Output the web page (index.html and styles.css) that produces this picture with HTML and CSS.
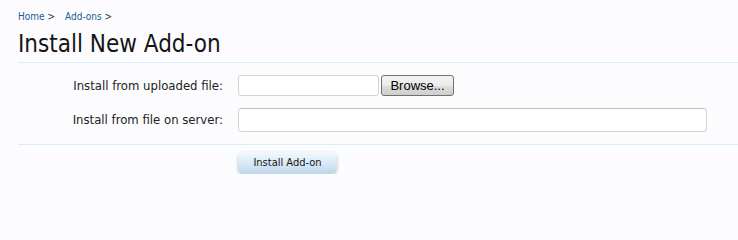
FILE: index.html
```html
<!DOCTYPE html>
<html>
<head>
<meta charset="utf-8">
<link rel="stylesheet" href="styles.css">
</head>
<body>
<div class="page">
  <nav class="crumbs">
    <span class="crumb"><a href="#">Home</a> <span class="arrow">&gt;</span></span>
    <span class="crumb"><a href="#">Add-ons</a> <span class="arrow">&gt;</span></span>
  </nav>
  <h1 class="title">Install New Add-on</h1>
  <form class="form">
    <div class="row">
      <label class="label">Install from uploaded file:</label>
      <div class="ctrl">
        <span class="file-box"></span><button type="button" class="browse">Browse...</button>
      </div>
    </div>
    <div class="row row2">
      <label class="label">Install from file on server:</label>
      <div class="ctrl">
        <span class="text-box"></span>
      </div>
    </div>
    <div class="submit-row">
      <button type="button" class="primary">Install Add-on</button>
    </div>
  </form>
</div>
</body>
</html>
```
FILE: styles.css
```css
html, body {
  margin: 0;
  padding: 0;
  background: #fcfcff;
}
body {
  font-family: "DejaVu Sans Condensed", "DejaVu Sans", sans-serif;
  color: #222;
}
.page {
  padding: 10px 0 0 18px;
}
.crumbs {
  display: flex;
  gap: 10px;
  font-size: 10px;
  line-height: 14px;
  height: 14px;
}
.crumbs a {
  color: #176093;
  text-decoration: none;
}
.arrow {
  color: #333;
}
.title {
  margin: 5px 0 0 0;
  font-size: 24px;
  font-weight: normal;
  line-height: 30px;
  color: #141414;
  border-bottom: 1px solid #d7edfc;
  padding-bottom: 3px;
}
.form {
  padding-top: 12px;
}
.row {
  display: flex;
  align-items: center;
  height: 21px;
}
.row2 {
  margin-top: 11px;
  height: 25px;
}
.label {
  width: 205px;
  text-align: right;
  font-size: 13px;
  color: #222;
  flex: none;
}
.ctrl {
  margin-left: 15px;
  display: flex;
  align-items: center;
}
.file-box {
  display: block;
  width: 139px;
  height: 19px;
  border: 1px solid #d4d4d4;
  border-radius: 3px;
  background: #fff;
}
.browse {
  margin: 0 0 0 2px;
  width: 73px;
  height: 21px;
  padding: 0;
  border: 1px solid #707070;
  border-radius: 3px;
  background: linear-gradient(#f2f2f2 0%, #ebebeb 50%, #dddddd 51%, #cfcfcf 100%);
  font-family: "Liberation Sans", Arial, sans-serif;
  font-size: 13px;
  color: #000;
}
.text-box {
  display: block;
  width: 467px;
  height: 22px;
  border: 1px solid #d4d4d4;
  border-top-color: #c0c0c0;
  border-radius: 4px;
  background: #fff;
}
.submit-row {
  margin-top: 12px;
  border-top: 1px solid #d7edfc;
  padding: 6px 0 0 220px;
}
.primary {
  width: 99px;
  height: 22px;
  padding: 0;
  border: none;
  border-radius: 6px;
  background: linear-gradient(#f2f8fd 0%, #d8e8f5 55%, #bcd5ea 100%);
  box-shadow: 0 1px 3px rgba(80, 110, 140, 0.45);
  font-family: "DejaVu Sans Condensed", "DejaVu Sans", sans-serif;
  font-size: 11px;
  color: #141414;
}
```
